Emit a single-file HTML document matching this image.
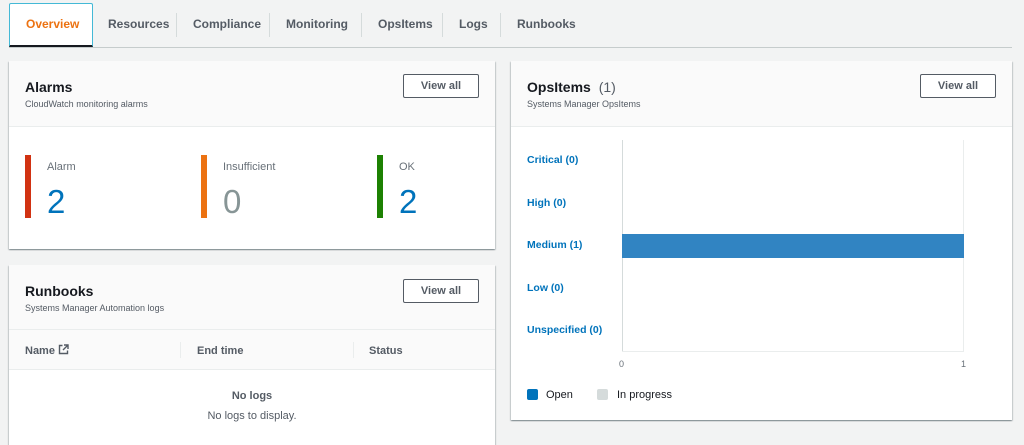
<!DOCTYPE html>
<html><head><meta charset="utf-8"><style>
*{box-sizing:border-box;margin:0;padding:0}
body{width:1024px;height:435px;background:#f2f3f3;font-family:"Liberation Sans",sans-serif;position:relative;overflow:hidden;color:#16191f}
.a{position:absolute}
.tab{position:absolute;top:17px;font-size:12px;font-weight:bold;color:#545b64}
.sep{position:absolute;top:13px;width:1px;height:24px;background:#d5dbdb}
.card{position:absolute;background:#fff;box-shadow:0 1px 1px rgba(0,28,36,.3),1px 1px 1px rgba(0,28,36,.15),-1px 1px 1px rgba(0,28,36,.15)}
.hd{position:absolute;left:0;right:0;top:0;background:#fafafa;border-bottom:1px solid #eaeded}
.title{position:absolute;font-size:14px;font-weight:bold;color:#16191f}
.sub{position:absolute;font-size:9px;color:#545b64}
.btn{position:absolute;width:76px;height:24px;border:1px solid #545b64;border-radius:2px;background:#fff;font-size:11px;font-weight:bold;color:#545b64;text-align:center;line-height:22px}
.bar{position:absolute;width:6px;height:63px;top:94px}
.lbl{position:absolute;top:100px;font-size:11px;color:#687078}
.num{position:absolute;top:122px;font-size:33px;color:#0073bb}
.yl{position:absolute;left:16px;font-size:10.5px;color:#0073bb;font-weight:bold}
</style></head><body>
<div class="a" style="left:9px;top:47px;width:1003px;height:1px;background:#c6cccc"></div>
<div class="a" style="left:9px;top:3px;width:84px;height:44px;background:#fff;border:1px solid #44b9d6;border-bottom:2px solid #16191f;border-radius:2px 2px 0 0"></div>
<div class="tab" style="left:26px;color:#ec7211">Overview</div>
<div class="tab" style="left:108px">Resources</div>
<div class="sep" style="left:176px"></div>
<div class="tab" style="left:193px">Compliance</div>
<div class="sep" style="left:269px"></div>
<div class="tab" style="left:286px">Monitoring</div>
<div class="sep" style="left:361px"></div>
<div class="tab" style="left:378px">OpsItems</div>
<div class="sep" style="left:442px"></div>
<div class="tab" style="left:459px">Logs</div>
<div class="sep" style="left:500px"></div>
<div class="tab" style="left:517px">Runbooks</div>

<div class="card" style="left:9px;top:61px;width:486px;height:188px">
<div class="hd" style="height:66px"></div>
<div class="title" style="left:16px;top:18px">Alarms</div>
<div class="sub" style="left:16px;top:38px">CloudWatch monitoring alarms</div>
<div class="btn" style="left:394px;top:13px">View all</div>
<div class="bar" style="left:16px;background:#d13212"></div>
<div class="lbl" style="left:38px">Alarm</div>
<div class="num" style="left:38px">2</div>
<div class="bar" style="left:192px;background:#ec7211"></div>
<div class="lbl" style="left:214px">Insufficient</div>
<div class="num" style="left:214px;color:#879596">0</div>
<div class="bar" style="left:368px;background:#1d8102"></div>
<div class="lbl" style="left:390px">OK</div>
<div class="num" style="left:390px">2</div>
</div>

<div class="card" style="left:9px;top:265px;width:486px;height:180px">
<div class="hd" style="height:65px"></div>
<div class="title" style="left:16px;top:18px">Runbooks</div>
<div class="sub" style="left:16px;top:38px">Systems Manager Automation logs</div>
<div class="btn" style="left:394px;top:14px">View all</div>
<div class="a" style="left:0;right:0;top:65px;height:40px;background:#fafafa;border-bottom:1px solid #eaeded"></div>
<div class="a" style="left:16px;top:79px;font-size:11px;font-weight:bold;color:#545b64">Name <svg width="11" height="11" viewBox="0 0 11 11" style="vertical-align:-1px"><path d="M4.5 1.5H1.5V9.5H9.5V6.5M6 1H10V5M10 1L5 6" fill="none" stroke="#545b64" stroke-width="1.4"/></svg></div>
<div class="a" style="left:171px;top:77px;width:1px;height:16px;background:#eaeded"></div>
<div class="a" style="left:188px;top:80px;font-size:11px;font-weight:bold;color:#545b64">End time</div>
<div class="a" style="left:344px;top:77px;width:1px;height:16px;background:#eaeded"></div>
<div class="a" style="left:360px;top:80px;font-size:11px;font-weight:bold;color:#545b64">Status</div>
<div class="a" style="left:0;width:486px;top:125px;text-align:center;font-size:11px;font-weight:bold;color:#545b64">No logs</div>
<div class="a" style="left:0;width:486px;top:145px;text-align:center;font-size:11px;color:#545b64">No logs to display.</div>
</div>

<div class="card" style="left:511px;top:61px;width:501px;height:359px">
<div class="hd" style="height:66px"></div>
<div class="title" style="left:16px;top:18px">OpsItems <span style="font-weight:normal;color:#545b64;margin-left:4px">(1)</span></div>
<div class="sub" style="left:16px;top:38px">Systems Manager OpsItems</div>
<div class="btn" style="left:409px;top:13px">View all</div>
<div class="a" style="left:111px;top:79px;width:1px;height:212px;background:#d5dbdb"></div>
<div class="a" style="left:452px;top:79px;width:1px;height:212px;background:#eaeded"></div>
<div class="a" style="left:111px;top:290px;width:342px;height:1px;background:#eaeded"></div>
<div class="a" style="left:111px;top:173px;width:342px;height:24px;background:#3184c2"></div>
<div class="yl" style="top:93px">Critical (0)</div>
<div class="yl" style="top:136px">High (0)</div>
<div class="yl" style="top:178px">Medium (1)</div>
<div class="yl" style="top:221px">Low (0)</div>
<div class="yl" style="top:263px">Unspecified (0)</div>
<div class="a" style="left:108px;top:298px;font-size:9px;color:#687078">0</div>
<div class="a" style="left:450px;top:298px;font-size:9px;color:#687078">1</div>
<div class="a" style="left:16px;top:328px;width:11px;height:11px;border-radius:2px;background:#0073bb"></div>
<div class="a" style="left:35px;top:328px;font-size:11px;color:#16191f">Open</div>
<div class="a" style="left:86px;top:328px;width:11px;height:11px;border-radius:2px;background:#d5dbdb"></div>
<div class="a" style="left:106px;top:328px;font-size:11px;color:#16191f">In progress</div>
</div>
</body></html>
